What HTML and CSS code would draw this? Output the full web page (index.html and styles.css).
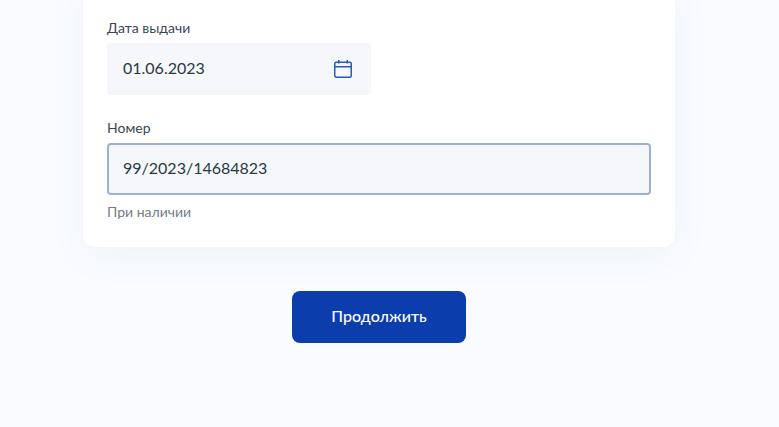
FILE: index.html
```html
<!DOCTYPE html>
<html lang="ru">
<head>
<meta charset="utf-8">
<title>Дата выдачи</title>
<link rel="stylesheet" href="styles.css">
</head>
<body>
<main class="page">
  <section class="card">
    <div class="field">
      <label class="label">Дата выдачи</label>
      <div class="input input-date">
        <span class="value">01.06.2023</span>
        <svg class="icon" width="20" height="20" viewBox="0 0 20 20" fill="none" stroke="#2a5bb5" stroke-width="1.5" aria-hidden="true">
          <rect x="1.75" y="3.25" width="16.5" height="15" rx="1.5"/>
          <path d="M1.75 7.75h16.5M5.75 1v3.5M14.25 1v3.5"/>
        </svg>
      </div>
    </div>
    <div class="field">
      <label class="label">Номер</label>
      <div class="input input-focus"><span class="value">99/2023/14684823</span></div>
      <p class="hint">При наличии</p>
    </div>
  </section>
  <button class="btn" type="button">Продолжить</button>
</main>
</body>
</html>
```
FILE: styles.css
```css
* { box-sizing: border-box; }
html, body { margin: 0; height: 100%; overflow: hidden; }
body {
  background: #f9fbfe;
  font-family: Lato, "Noto Sans", sans-serif;
  color: #0b1f33;
}
.page {
  display: flex;
  flex-direction: column;
  align-items: center;
  margin-top: -20px;
  padding-right: 21px;
}
.card {
  width: 592px;
  height: 267px;
  padding: 40px 24px 0;
  background: #fff;
  border-radius: 12px;
  box-shadow: 0 8px 40px rgba(44, 80, 148, 0.05);
  display: flex;
  flex-direction: column;
  gap: 25px;
}
.label {
  display: block;
  font-size: 14px;
  line-height: 16px;
  margin-bottom: 7px;
  color: #3a4753;
}
.input {
  height: 52px;
  background: #f5f7fa;
  border-radius: 4px;
  padding: 0 16px;
  display: flex;
  align-items: center;
  font-size: 16px;
  color: #2a3844;
}
.value { padding-bottom: 4px; }
.input-date {
  width: 264px;
  justify-content: space-between;
  padding-right: 18px;
}
.input-focus {
  border: 2px solid #9db1cf;
  padding: 0 14px;
}
.icon { display: block; }
.hint {
  margin: 9px 0 0;
  font-size: 14px;
  line-height: 16px;
  color: #717c88;
}
.btn {
  margin-top: 44px;
  width: 174px;
  height: 52px;
  padding: 0 0 4px;
  border: 0;
  border-radius: 8px;
  background: #0b3dac;
  color: #fff;
  font-family: inherit;
  font-size: 16px;
  font-weight: 500;
}
```
